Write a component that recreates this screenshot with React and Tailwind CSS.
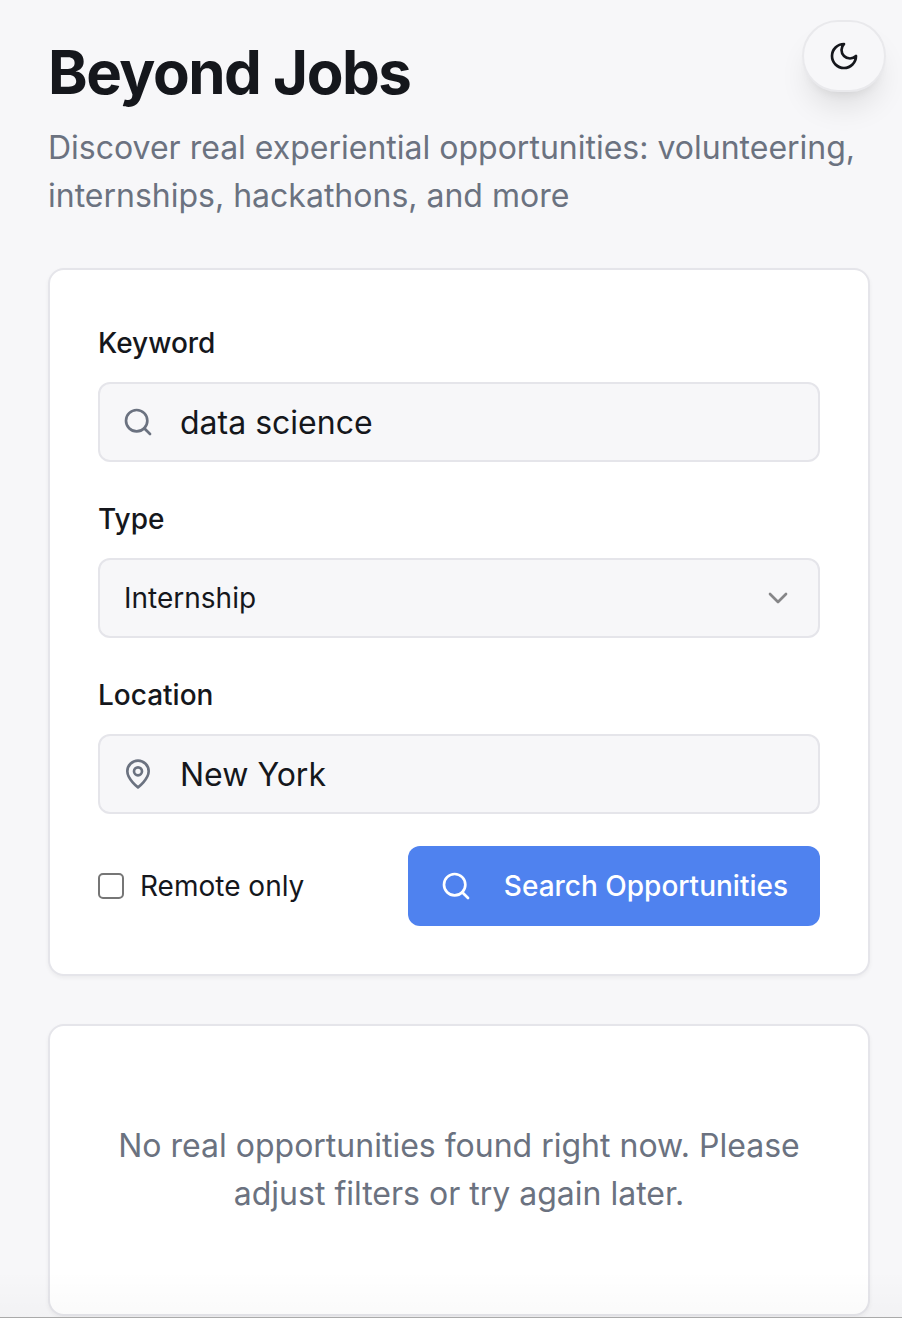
import { Search, ChevronDown } from "lucide-react";

const label = "text-[28px] leading-[50px] font-medium text-[#15171c]";
const group = "flex flex-col gap-[14px]";
const field =
  "h-20 w-full rounded-xl border-2 border-[#e5e5ea] bg-[#f7f7f9] text-[#15171c] outline-none";
const card =
  "mt-12 rounded-2xl border-2 border-[#e5e5ea] bg-white shadow-[0_2px_4px_rgba(0,0,0,0.05)]";
const glyph = {
  width: 32,
  height: 32,
  viewBox: "0 0 24 24",
  fill: "none",
  stroke: "currentColor",
  strokeWidth: 2,
  strokeLinecap: "round",
  strokeLinejoin: "round",
  "aria-hidden": true,
};

function MoonIcon() {
  return (
    <svg {...glyph}>
      <path d="M12 3a6 6 0 0 0 9 9 9 9 0 1 1-9-9Z" />
    </svg>
  );
}

function PinIcon({ className }) {
  return (
    <svg {...glyph} className={className}>
      <path d="M20 10c0 6-8 12-8 12s-8-6-8-12a8 8 0 0 1 16 0Z" />
      <circle cx="12" cy="10" r="3" />
    </svg>
  );
}

export default function App() {
  return (
    <div className="relative min-h-screen bg-[#f7f7f9] pt-10 pr-8 pb-[2px] pl-12 font-['Inter',sans-serif] text-[#15171c]">
      <button
        type="button"
        aria-label="Toggle theme"
        className="absolute top-5 right-4 flex h-[72px] w-[84px] items-center justify-center rounded-full border-2 border-[#e9e9ec] bg-[#f7f7f9] shadow-[0_20px_30px_-6px_rgba(0,0,0,0.1),0_8px_12px_-8px_rgba(0,0,0,0.1)]"
      >
        <MoonIcon />
      </button>

      <header>
        <h1 className="text-[60px] leading-[64px] font-bold tracking-tight">Beyond Jobs</h1>
        <p className="mt-5 text-[32px] leading-[48px] text-[#6b7280]">
          Discover real experiential opportunities: volunteering, internships, hackathons, and more
        </p>
      </header>

      <form onSubmit={(e) => e.preventDefault()} className={`${card} p-12`}>
        <div className="flex flex-col gap-8">
          <div className={group}>
            <label htmlFor="keyword" className={label}>Keyword</label>
            <div className="relative">
              <Search size={32} className="absolute top-6 left-6 text-[#6b7280]" />
              <input id="keyword" defaultValue="data science" className={`${field} pl-20 text-[32px]`} />
            </div>
          </div>
          <div className={group}>
            <label htmlFor="type" className={label}>Type</label>
            <div className="relative">
              <select id="type" defaultValue="Internship" className={`${field} appearance-none px-6 text-[28px]`}>
                <option>Internship</option>
                <option>Volunteering</option>
                <option>Hackathon</option>
              </select>
              <ChevronDown size={32} className="pointer-events-none absolute top-6 right-[26px] text-[#868688]" />
            </div>
          </div>
          <div className={group}>
            <label htmlFor="location" className={label}>Location</label>
            <div className="relative">
              <PinIcon className="absolute top-6 left-6 text-[#6b7280]" />
              <input id="location" defaultValue="New York" className={`${field} pl-20 text-[32px]`} />
            </div>
          </div>
          <div className="flex items-center justify-between">
            <label htmlFor="remote" className="flex items-center gap-4 text-[28px] leading-10">
              <input
                id="remote"
                type="checkbox"
                className="size-[26px] appearance-none rounded-[5px] border-2 border-[#767676] bg-white checked:bg-[#4f82ef]"
              />
              Remote only
            </label>
            <button
              type="submit"
              className="flex h-20 items-center gap-8 rounded-xl bg-[#4f82ef] px-8 text-[28px] font-medium text-white"
            >
              <Search size={32} />
              Search Opportunities
            </button>
          </div>
        </div>
      </form>

      <section className={`${card} px-12 py-24 text-center text-[32px] leading-[48px] text-[#6b7280]`}>
        <p>No real opportunities found right now. Please adjust filters or try again later.</p>
      </section>

      <div className="pointer-events-none absolute inset-x-0 bottom-0 h-12 border-b border-[#aaaaaa] bg-linear-to-t from-black/2 to-transparent" />
    </div>
  );
}
